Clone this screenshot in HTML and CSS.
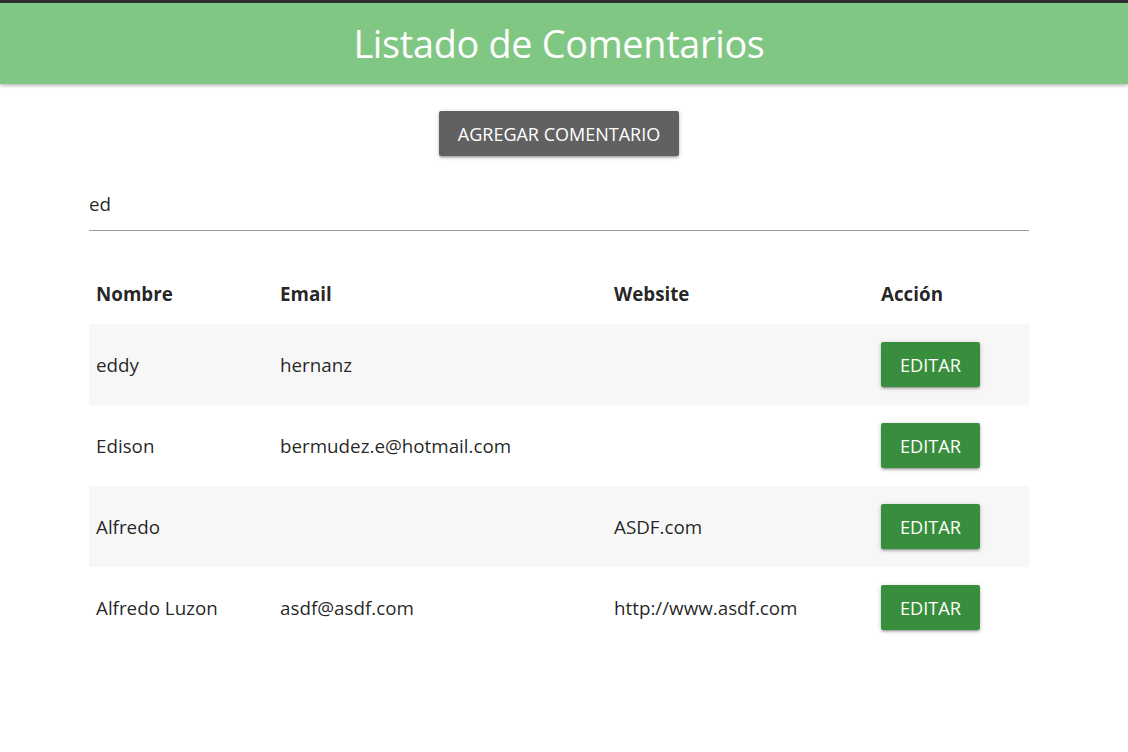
FILE: index.html
```html
<!DOCTYPE html>
<html lang="es">
<head>
<meta charset="utf-8">
<title>Listado de Comentarios</title>
<link rel="stylesheet" href="styles.css">
</head>
<body>
<header class="topbar">
  <h1 class="title">Listado de Comentarios</h1>
</header>
<main class="container">
  <div class="actions">
    <button class="btn btn-grey">AGREGAR COMENTARIO</button>
  </div>
  <div class="search">
    <input class="search-input" type="text" value="ed">
  </div>
  <table class="table">
    <thead>
      <tr>
        <th class="col-name">Nombre</th>
        <th class="col-email">Email</th>
        <th class="col-web">Website</th>
        <th class="col-action">Acción</th>
      </tr>
    </thead>
    <tbody>
      <tr>
        <td>eddy</td>
        <td>hernanz</td>
        <td></td>
        <td><button class="btn btn-green">EDITAR</button></td>
      </tr>
      <tr>
        <td>Edison</td>
        <td>bermudez.e@hotmail.com</td>
        <td></td>
        <td><button class="btn btn-green">EDITAR</button></td>
      </tr>
      <tr>
        <td>Alfredo</td>
        <td></td>
        <td>ASDF.com</td>
        <td><button class="btn btn-green">EDITAR</button></td>
      </tr>
      <tr>
        <td>Alfredo Luzon</td>
        <td>asdf@asdf.com</td>
        <td>http://www.asdf.com</td>
        <td><button class="btn btn-green">EDITAR</button></td>
      </tr>
    </tbody>
  </table>
</main>
</body>
</html>
```
FILE: styles.css
```css
html, body {
  margin: 0;
  padding: 0;
  background: #ffffff;
}
body {
  font-family: "Open Sans", "Noto Sans", "Liberation Sans", sans-serif;
  color: rgba(0, 0, 0, 0.87);
  border-top: 3px solid #2d2d2d;
}
.topbar {
  background: #81c784;
  height: 81px;
  display: flex;
  align-items: center;
  justify-content: center;
  padding-right: 10px;
  box-shadow: 0 2px 3px rgba(0, 0, 0, 0.25);
  position: relative;
}
.title {
  margin: 0;
  color: #ffffff;
  font-weight: 400;
  font-size: 37.8px;
  line-height: 1;
  letter-spacing: -0.3px;
}
.container {
  width: 940px;
  margin-left: 89px;
}
.actions {
  display: flex;
  justify-content: center;
  padding-top: 27px;
}
.btn {
  border: none;
  border-radius: 2px;
  color: #ffffff;
  font-family: inherit;
  font-size: 18px;
  height: 45px;
  padding: 0 20px;
  cursor: pointer;
  box-shadow: 0 2px 2px 0 rgba(0,0,0,0.14), 0 3px 1px -2px rgba(0,0,0,0.12), 0 1px 5px 0 rgba(0,0,0,0.2);
}
.btn-grey {
  background: #616161;
  width: 240px;
  padding: 0;
}
.btn-green {
  background: #388e3c;
  width: 99px;
  padding: 0;
  font-size: 18.2px;
}
.search {
  margin-top: 27px;
}
.search-input {
  display: block;
  width: 100%;
  box-sizing: border-box;
  border: none;
  border-bottom: 1px solid #9e9e9e;
  outline: none;
  height: 48px;
  padding: 0 0 6px 0;
  font-family: inherit;
  font-size: 18.8px;
  color: rgba(0, 0, 0, 0.87);
  background: transparent;
}
.table {
  width: 100%;
  border-collapse: collapse;
  margin-top: 33px;
  font-size: 18.8px;
}
.table th {
  text-align: left;
  font-weight: 700;
  height: 60px;
  padding: 0 7px;
  vertical-align: middle;
}
.table td {
  padding: 18px 7px;
  height: 45px;
  vertical-align: middle;
}
.table tbody tr:nth-child(odd) {
  background: #f7f7f7;
}
.col-name { width: 170px; }
.col-email { width: 320px; }
.col-web { width: 253px; }
```
